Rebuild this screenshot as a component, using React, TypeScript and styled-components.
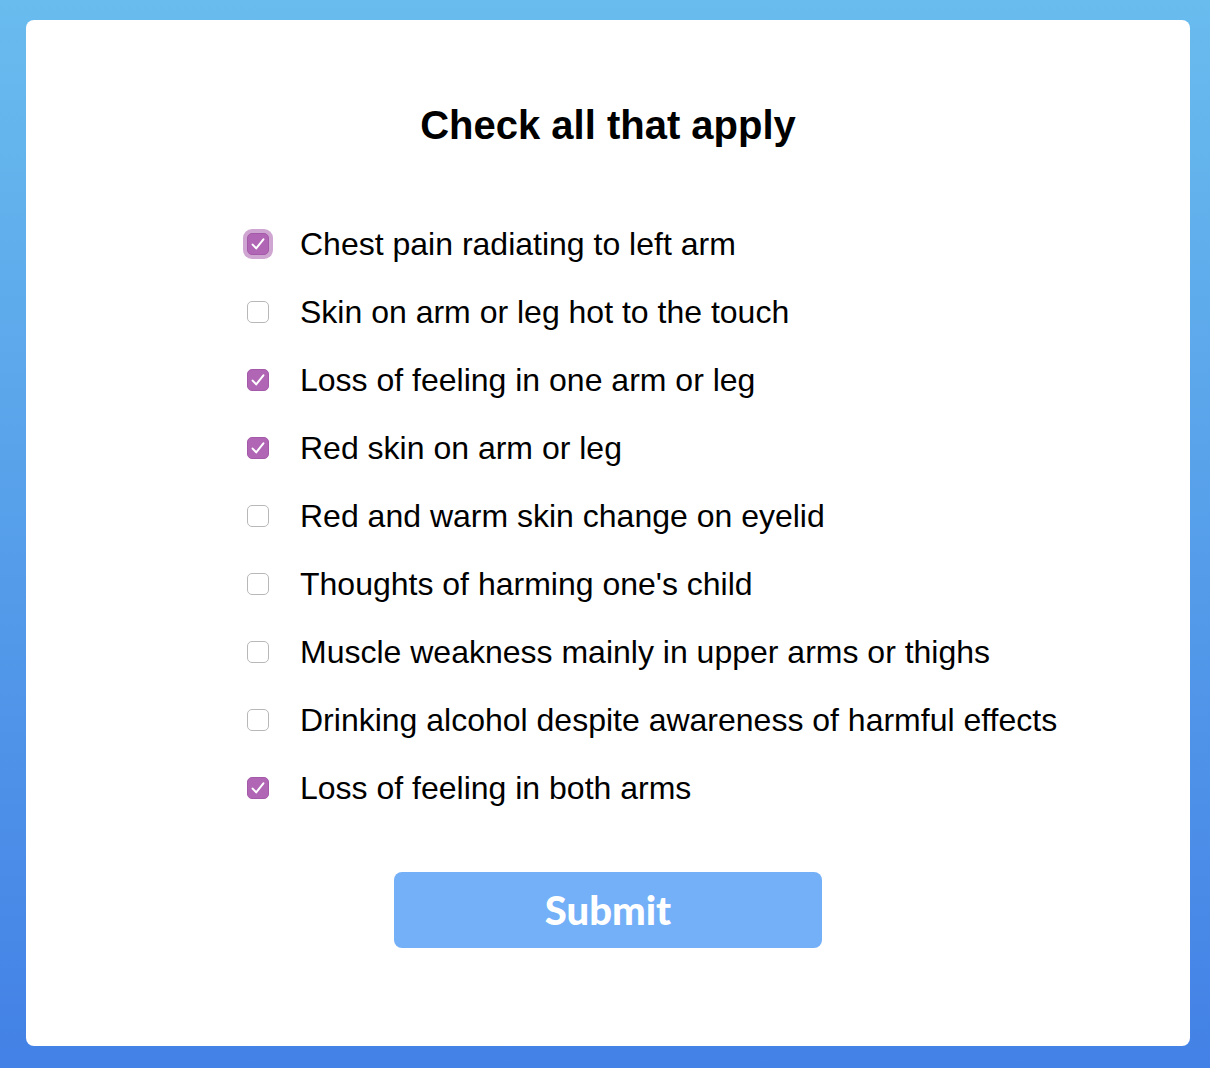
import React, { useState } from "react";
import styled, { createGlobalStyle } from "styled-components";

const GlobalStyle = createGlobalStyle`
  html, body {
    margin: 0;
    padding: 0;
    height: 100%;
  }
  body {
    font-family: "Liberation Sans", Arial, sans-serif;
  }
`;

const Page = styled.div`
  box-sizing: border-box;
  height: 1068px;
  padding: 20px 20px 22px 26px;
  background: linear-gradient(180deg, #69bcee 0%, #4381e6 100%);
  display: flex;
`;

const Card = styled.div`
  flex: 1;
  background: #ffffff;
  border-radius: 8px;
  padding-top: 81px;
  display: flex;
  flex-direction: column;
  align-items: center;
`;

const Title = styled.h1`
  margin: 0;
  font-size: 40px;
  line-height: 48px;
  font-weight: bold;
  color: #000;
`;

const List = styled.ul`
  list-style: none;
  margin: 61px 0 0 0;
  padding: 0 0 0 221px;
  align-self: stretch;
`;

const Row = styled.li`
  height: 68px;
  display: flex;
  align-items: center;
  gap: 31px;
  cursor: pointer;
`;

const Box = styled.span<{ $checked: boolean; $focused: boolean }>`
  box-sizing: border-box;
  width: 22px;
  height: 22px;
  flex: none;
  border-radius: 5px;
  display: flex;
  align-items: center;
  justify-content: center;
  background: ${(p) => (p.$checked ? "#b066b4" : "#ffffff")};
  border: 1px solid ${(p) => (p.$checked ? "#a55aa9" : "#b8b8b8")};
  box-shadow: ${(p) => (p.$focused ? "0 0 0 4px #cfa5d1" : "none")};
`;

const Label = styled.span`
  font-size: 32px;
  color: #000;
  line-height: 36px;
`;

const SubmitButton = styled.button`
  margin-top: 50px;
  width: 428px;
  height: 76px;
  border: none;
  border-radius: 8px;
  background: #74b0f8;
  color: #ffffff;
  font-family: Lato, "Open Sans", sans-serif;
  font-weight: 900;
  font-size: 40px;
  cursor: pointer;
`;

const items = [
  "Chest pain radiating to left arm",
  "Skin on arm or leg hot to the touch",
  "Loss of feeling in one arm or leg",
  "Red skin on arm or leg",
  "Red and warm skin change on eyelid",
  "Thoughts of harming one's child",
  "Muscle weakness mainly in upper arms or thighs",
  "Drinking alcohol despite awareness of harmful effects",
  "Loss of feeling in both arms",
];

const Check = () => (
  <svg width="20" height="20" viewBox="0 0 20 20">
    <path
      d="M4.6 10.6 L8.2 14.4 L15.4 5.4"
      fill="none"
      stroke="#fff"
      strokeWidth="2"
      strokeLinecap="round"
      strokeLinejoin="round"
    />
  </svg>
);

export default function App() {
  const [checked, setChecked] = useState<boolean[]>([
    true, false, true, true, false, false, false, false, true,
  ]);

  const toggle = (i: number) =>
    setChecked((c) => c.map((v, j) => (j === i ? !v : v)));

  return (
    <>
      <GlobalStyle />
      <Page>
        <Card>
          <Title>Check all that apply</Title>
          <List>
            {items.map((text, i) => (
              <Row key={text} onClick={() => toggle(i)}>
                <Box $checked={checked[i]} $focused={i === 0}>
                  {checked[i] && <Check />}
                </Box>
                <Label>{text}</Label>
              </Row>
            ))}
          </List>
          <SubmitButton>Submit</SubmitButton>
        </Card>
      </Page>
    </>
  );
}
